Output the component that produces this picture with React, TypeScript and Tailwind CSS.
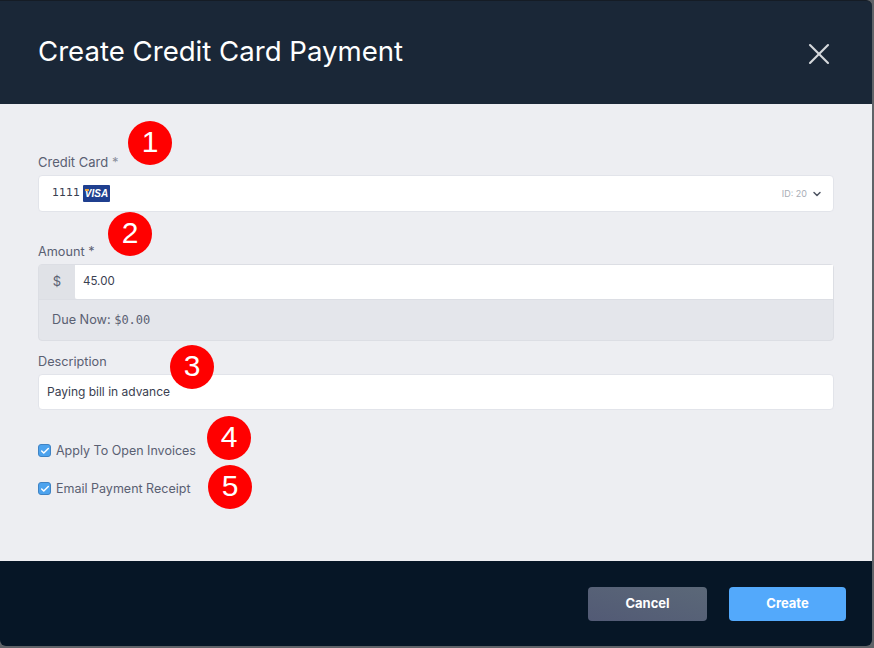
import { X, ChevronDown, Check } from 'lucide-react';

function Marker({ n, className }: { n: number; className: string }) {
  return (
    <div
      className={`absolute w-11 h-11 pb-[3px] rounded-full bg-[#ff0000] text-white flex items-center justify-center text-[30px] font-['Liberation_Sans',sans-serif] leading-none ${className}`}
    >
      {n}
    </div>
  );
}

function CheckRow({ label, className }: { label: string; className: string }) {
  return (
    <div className={`flex items-start gap-[5px] ${className}`}>
      <span className="mt-[1px] w-[13px] h-[13px] rounded-[3px] bg-[#4da3ee] border border-[#3f83c4] flex items-center justify-center">
        <Check className="w-[10px] h-[10px] text-white" strokeWidth={3.5} />
      </span>
      <span className="text-[12.5px] leading-4 text-[#5a6072]">{label}</span>
    </div>
  );
}

export default function App() {
  return (
    <div className="relative w-[874px] h-[648px] bg-[#5f6368] font-['Inter',sans-serif] overflow-hidden">
      <div className="w-[872px] h-[646px] flex flex-col">
        {/* Header */}
        <header className="h-[104px] bg-[#1a2737] border-t border-[#151c25] rounded-tr-md flex items-start justify-between pl-[38px] pr-[35px]">
          <h1 className="mt-[32px] text-[27.6px] leading-9 text-white font-normal">Create Credit Card Payment</h1>
          <X className="mt-[35px] w-9 h-9 text-[#d6d9dc]" strokeWidth={1.4} />
        </header>

        {/* Body */}
        <main className="flex-1 bg-[#edeef2] px-[38px] pt-[50px]">
          <label className="block text-[13px] leading-4 text-[#5a6072] mb-[5px]">
            Credit Card <span className="text-[#8a8f9c]">*</span>
          </label>
          <div className="h-[37px] bg-white border border-[#e2e4ea] rounded-[4px] flex items-center pl-[13px] pr-[10px]">
            <span className="text-[11px] font-['DejaVu_Sans',sans-serif] text-[#3a4050]">1111</span>
            <span className="relative ml-[3px] w-[27px] h-[17px] bg-[#1f3f8f] rounded-[1px] flex items-center justify-center text-[10px] font-bold italic text-white font-['Liberation_Sans',sans-serif]">
              VISA
              <span className="absolute left-[2px] top-[4px] w-[4px] h-[2px] bg-[#e8a33d]" />
            </span>
            <span className="ml-auto text-[9px] text-[#a9adb6]">ID: 20</span>
            <ChevronDown className="ml-[4px] w-3 h-3 text-[#4f5563]" strokeWidth={3} />
          </div>

          <label className="block mt-[31px] text-[12.7px] leading-[18px] text-[#5a6072] mb-[3px]">
            Amount <span className="text-[#5a6072]">*</span>
          </label>
          <div className="bg-[#e4e6eb] border border-[#dcdee4] rounded-[4px]">
            <div className="h-[35px] flex border-b border-[#dcdee4]">
              <div className="w-9 flex items-center justify-center text-[13px] text-[#5a6072] bg-[#e0e2e7]">$</div>
              <div className="flex-1 bg-white flex items-center pl-2 text-[11.5px] text-[#3a4050] rounded-bl-[2px]">45.00</div>
            </div>
            <div className="h-[40px] flex items-center pl-[13px] pb-[1px] text-[12.7px] text-[#5a6072]">
              Due Now:&nbsp;<span className="font-['DejaVu_Sans_Mono',monospace] text-[12px]">$0.00</span>
            </div>
          </div>

          <label className="block mt-[12px] text-[12.7px] leading-[18px] text-[#5a6072] mb-[3px]">Description</label>
          <div className="h-[36px] bg-white border border-[#e2e4ea] rounded-[4px] flex items-center pl-2 text-[12px] text-[#3a4050]">
            Paying bill in advance
          </div>

          <CheckRow label="Apply To Open Invoices" className="mt-[33px]" />
          <CheckRow label="Email Payment Receipt" className="mt-[22px]" />
        </main>

        {/* Footer */}
        <footer className="h-[85px] bg-[#061626] rounded-b-md flex justify-end items-start gap-[22px] pt-[26px] pr-[26px]">
          <button className="w-[119px] h-[34px] rounded-[4px] bg-gradient-to-tr from-[#525a75] to-[#5b6878] text-white text-[13px] font-bold">
            Cancel
          </button>
          <button className="w-[117px] h-[34px] rounded-[4px] bg-[#53a9fb] text-white text-[13px] font-bold">
            Create
          </button>
        </footer>
      </div>

      <Marker n={1} className="left-[128px] top-[121px]" />
      <Marker n={2} className="left-[108px] top-[212px]" />
      <Marker n={3} className="left-[170px] top-[345px]" />
      <Marker n={4} className="left-[207px] top-[416px]" />
      <Marker n={5} className="left-[208px] top-[465px]" />
    </div>
  );
}
